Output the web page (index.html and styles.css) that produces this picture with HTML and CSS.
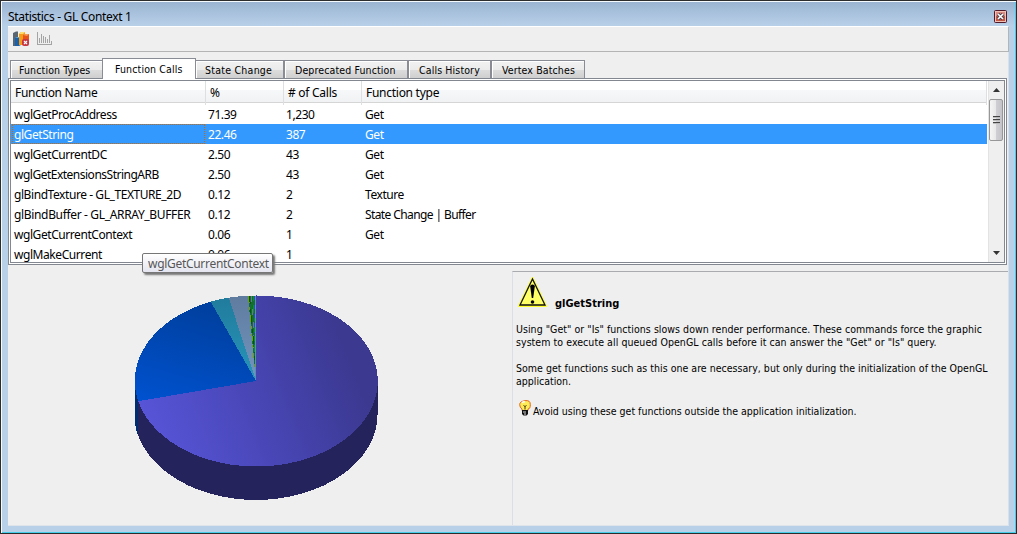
FILE: index.html
```
<!DOCTYPE html>
<html lang="en">
<head>
<meta charset="utf-8">
<title>Statistics - GL Context 1</title>
<link rel="stylesheet" href="styles.css">
</head>
<body>
<div class="window">
  <header class="titlebar">
    <span class="title">Statistics - GL Context 1</span>
    <svg class="close" width="13" height="13" viewBox="0 0 13 13"><rect x=".5" y=".5" width="12" height="12" rx="1" fill="#d98b80" stroke="#50192a"/><rect x="1.5" y="1.5" width="10" height="10" fill="none" stroke="#f0bfb5"/><rect x="2" y="6" width="9" height="5" fill="#c2553f"/><path d="M4 4l5 5M9 4l-5 5" stroke="#4b4150" stroke-width="3.2"/><path d="M4 4l5 5M9 4l-5 5" stroke="#fff" stroke-width="1.6"/></svg>
  </header>
  <main class="client">
    <div class="toolbar">
      <svg width="17" height="16" viewBox="0 0 17 16"><path d="M0 2l3-1.500h2V15H0z" fill="#596570"/><path d="M2 7l2-1h4v8l-2 1H2z" fill="#1761ad"/><path d="M2 7l2-1h4l-2 1z" fill="#55a4df"/><path d="M6 3l2-2h4v12l-2 1H6z" fill="#f59b16"/><path d="M6 3l2-2h4l-2 2z" fill="#ffdc69"/><path d="M10 4l2-1h4v9h-6z" fill="#e85319"/><path d="M10 4l2-1h4l-2 2z" fill="#f49a56"/><rect x="9" y="8" width="7" height="7" rx="2" fill="#c73845"/><path d="M11 10l3 3M14 10l-3 3" stroke="#fff" stroke-width="1.100"/></svg>
      <svg width="16" height="16" viewBox="0 0 16 16" shape-rendering="crispEdges"><path d="M.5 1v13M0 13.500h15M2.500 7v5M4.500 3v9M6.500 5v7M8.500 6v6M10.500 8v4M12.500 4v8M14.500 10v3" fill="none" stroke="#a4a4a4"/></svg>
    </div>
    <nav class="tabs">
      <div class="tab t1"><span>Function Types</span></div>
      <div class="tab t2 active"><span>Function Calls</span></div>
      <div class="tab t3"><span>State Change</span></div>
      <div class="tab t4"><span>Deprecated Function</span></div>
      <div class="tab t5"><span>Calls History</span></div>
      <div class="tab t6"><span>Vertex Batches</span></div>
    </nav>
    <section class="tabpage">
      <div class="list">
        <div class="grid">
          <div class="row head"><span>Function Name</span><span>%</span><span># of Calls</span><span>Function type</span></div>
          <div class="rows">
            <div class="row"><span>wglGetProcAddress</span><span>71.39</span><span>1,230</span><span>Get</span></div>
            <div class="row selected"><span>glGetString</span><span>22.46</span><span>387</span><span>Get</span></div>
            <div class="row"><span>wglGetCurrentDC</span><span>2.50</span><span>43</span><span>Get</span></div>
            <div class="row"><span class="tight">wglGetExtensionsStringARB</span><span>2.50</span><span>43</span><span>Get</span></div>
            <div class="row"><span>glBindTexture - GL_TEXTURE_2D</span><span>0.12</span><span>2</span><span>Texture</span></div>
            <div class="row"><span class="loose">glBindBuffer - GL_ARRAY_BUFFER</span><span>0.12</span><span>2</span><span class="tighter">State Change | Buffer</span></div>
            <div class="row"><span>wglGetCurrentContext</span><span>0.06</span><span>1</span><span>Get</span></div>
            <div class="row"><span>wglMakeCurrent</span><span>0.06</span><span>1</span><span></span></div>
          </div>
        </div>
        <div class="scrollbar">
          <div class="arrow"><svg width="7" height="4" viewBox="0 0 7 4"><path d="M0 4L3.500 0 7 4z" fill="#333"/></svg></div>
          <div class="thumb"><i></i><i></i><i></i></div>
          <div class="arrow down"><svg width="7" height="4" viewBox="0 0 7 4"><path d="M0 0L3.500 4 7 0z" fill="#333"/></svg></div>
        </div>
      </div>
    </section>
    <section class="lower">
      <div class="chart">
        <svg width="244" height="206" viewBox="0 0 244 206" shape-rendering="crispEdges">
          <defs>
            <linearGradient id="purple" gradientUnits="userSpaceOnUse" x1="18" y1="155" x2="220" y2="75"><stop offset="0" stop-color="#5855d9"/><stop offset=".5" stop-color="#4947b7"/><stop offset="1" stop-color="#3b3990"/></linearGradient>
            <linearGradient id="blue" x1=".35" y1="0" x2="0" y2="1"><stop offset="0" stop-color="#0040a0"/><stop offset="1" stop-color="#0052d0"/></linearGradient>
            <linearGradient id="teal" x1="0" y1="0" x2="0" y2="1"><stop offset="0" stop-color="#217c9d"/><stop offset="1" stop-color="#2795ba"/></linearGradient>
            <linearGradient id="steel" x1="0" y1="0" x2="0" y2="1"><stop offset="0" stop-color="#5f7c9f"/><stop offset="1" stop-color="#7495be"/></linearGradient>
          </defs>
          <path d="M.500 86v33.500A121.500 85.500 0 0 0 243.500 119.500V86z" fill="#25235b"/>
          <path d="M.500 86v33.500Q.500 130 3.500 139V105z" fill="#002d70"/>
          <path d="M122 86V.5A121.500 85.500 0 1 1 4.200 106.200z" fill="url(#purple)"/>
          <path d="M122 86L4.200 106.200A121.500 85.500 0 0 1 76.700 6.700z" fill="url(#blue)"/>
          <path d="M122 86L76.700 6.700A121.500 85.500 0 0 1 94.700 2.700z" fill="url(#teal)"/>
          <path d="M122 86L94.700 2.700A121.500 85.500 0 0 1 114 .7z" fill="url(#steel)"/>
          <path d="M122 86L114 .7 122 .5z" fill="#156c35"/>
          <path d="M114.500 1L121.500 80" stroke="#709e08" stroke-dasharray="7 4 3 5" fill="none"/>
          <path d="M115.500 1L121.500 70" stroke="#006000" stroke-dasharray="8 5 4 3" fill="none"/>
          <path d="M117.500 1L121.500 65" stroke="#6a70a8" stroke-dasharray="6 7" fill="none"/>
          <path d="M119.500 1L121.500 75" stroke="#09941b" stroke-dasharray="5 4 8 3" fill="none"/>
          <path d="M120.500 1L121.500 74" stroke="#2153bb" stroke-dasharray="4 5" fill="none"/>
          <path d="M121.500 1V85" stroke="#568fba" fill="none"/>
        </svg>
      </div>
      <article class="info">
        <div class="info-head">
          <svg width="29" height="30" viewBox="0 0 29 30"><path d="M14.500 1L28 29H1z" fill="#ffff66" stroke="#ffff30" stroke-width="2"/><path d="M14.500 2L27 28H2z" fill="#ffff66" stroke="#111" stroke-width="1.300"/><path d="M12.200 9.500Q12.200 7.500 14.500 7.500T16.800 9.500L15.200 21h-1.400z"/><circle cx="14.500" cy="25" r="1.800"/></svg>
          <h1><span>glGetString</span></h1>
        </div>
        <p><span class="a1">Using "Get" or "Is" functions slows down render performance. These commands force the graphic</span><br><span class="a2">system to execute all queued OpenGL calls before it can answer the "Get" or "Is" query.</span></p>
        <p><span class="a3">Some get functions such as this one are necessary, but only during the initialization of the OpenGL</span><br><span class="a4">application.</span></p>
        <div class="tip">
          <svg width="12" height="16" viewBox="0 0 12 16"><path d="M3 9Q.7 7.500.7 4.500T6 .7t5.300 3.800T9 9v1.500H3z" fill="#ffed58" stroke="#e36218"/><path d="M3 3q1-2 3-1" stroke="#fff" stroke-width="1.500" fill="none"/><path d="M4.500 5.500l1.500 1 1.500-1M6 6.500v3" stroke="#45340e" fill="none"/><path d="M3 10h6v4l-1.500 1.500h-3L3 14z" fill="#111"/><path d="M4 12h3M5 14h2" stroke="#ddd"/></svg>
          <span class="a5">Avoid using these get functions outside the application initialization.</span>
        </div>
      </article>
    </section>
  </main>
  <div class="tooltip"><span>wglGetCurrentContext</span></div>
</div>
</body>
</html>
```
FILE: styles.css
```
* { box-sizing: border-box; }
body { margin: 0; font-family: "DejaVu Sans Condensed", "DejaVu Sans", sans-serif; font-stretch: condensed; font-size: 10.5px; color: #000; }
svg { display: block; flex: none; }
.window { width: 1017px; height: 534px; position: relative; border: 1px solid #2c2c2c; padding: 0 7px 7px; background: #b9d0e9; box-shadow: inset 1px 1px #f5fafd, inset -1px -1px #45cdea; display: flex; flex-direction: column; overflow: hidden; white-space: nowrap; }
.titlebar { height: 24px; flex: none; margin: 1px -6px 0; padding: 2px 8px 0 6px; display: flex; align-items: center; justify-content: space-between; background: linear-gradient(#9ab4d1, #b9d0e9); font-family: "Noto Sans", sans-serif; font-size: 12px; }
.title { letter-spacing: -.33px; padding-top: 2px; }
.close { margin-top: 3px; }
.client { width: 1001px; flex: 1; min-height: 0; background: #efefef; display: flex; flex-direction: column; border-right: 1px solid #d9e0ea; border-bottom: 1px solid #dfe4ea; }
.toolbar { width: 1001px; height: 26px; flex: none; border-top: 1px solid #fff; border-right: 1px solid #b4b4b4; border-bottom: 1px solid #b4b4b4; padding: 4px 5px; display: flex; gap: 7px; }
.tabs { height: 26px; flex: none; display: flex; align-items: flex-end; padding-left: 2px; letter-spacing: .13px; }
.tab { height: 18px; border: 1px solid #898c95; border-width: 1px 1px 0; background: linear-gradient(#f2f2f2, #ebebeb 50%, #dddddd 51%, #cfcfcf); box-shadow: inset 1px 1px #fff; padding: 3px 0 0 8px; line-height: 13px; }
.tab.active { height: 21px; background: #fff; padding: 4px 0 0 12px; margin-bottom: -1px; position: relative; }
.t1 { width: 93px; border-right: 0; }
.t2 { width: 94px; margin-left: -1px; }
.t3 { width: 88px; border-left: 0; padding-left: 9px; letter-spacing: .25px; }
.t4 { width: 124px; padding-left: 10px; }
.t5 { width: 83px; padding-left: 10px; }
.t6 { width: 94px; padding-left: 10px; }
.tabpage { width: 999px; height: 187px; flex: none; border: 1px solid #828790; background: #fff; padding: 1px; }
.list { width: 995px; height: 183px; border: 1px solid #828790; display: flex; overflow: hidden; font-family: "Noto Sans", sans-serif; font-size: 12px; }
.grid { width: 976px; }
.row { display: grid; grid-template-columns: 194px 78px 79px 1fr; height: 20px; line-height: 20px; letter-spacing: -.43px; }
.row span { padding-left: 3px; }
.row span:last-child { padding-left: 3px; }
.row .tight { letter-spacing: -.5px; }
.row .tighter { letter-spacing: -.6px; }
.row .loose { letter-spacing: -.34px; }
.row.head { grid-template-columns: 195px 78px 78px 1fr; width: 976px; height: 22px; line-height: 24px; letter-spacing: -.27px; border-bottom: 1px solid #d5d5d5; background: linear-gradient(#fff 9px, #f7f8fa 9px, #f1f2f4); }
.head span { border-right: 1px solid #dedfe1; }
.row.head span { padding-left: 4px; }
.rows { padding-top: 1px; }
.rows .row { line-height: 22px; }
.selected { background: #3399ff; color: #fff; }
.selected span:first-child { outline: 1px dotted #cc6600; outline-offset: -1px; margin-left: 1px; padding-left: 2px; height: 20px; overflow: hidden; }
.scrollbar { width: 16px; margin-left: auto; background: #efefef; border-left: 1px solid #e3e3e3; display: flex; flex-direction: column; }
.arrow { height: 18px; flex: none; display: flex; align-items: center; justify-content: center; padding-right: 1px; }
.down { margin-top: auto; }
.thumb { width: 14px; height: 42px; border: 1px solid #979797; border-radius: 2px; background: linear-gradient(90deg, #f5f5f5, #e8e8e8 48%, #d0d0d4 50%, #c4c4c8); display: flex; flex-direction: column; align-items: center; justify-content: center; gap: 1px; }
.thumb i { width: 7px; height: 2px; border-top: 1px solid #444; background: #bbb; }
.lower { flex: 1; min-height: 0; display: flex; padding-top: 6px; }
.chart { width: 504px; padding: 24px 0 0 126px; }
.info { width: 496px; border-top: 1px solid #a9abaf; border-left: 1px solid #dddde8; padding: 5px 0 0 3px; line-height: 13px; }
.info-head { display: flex; height: 46px; padding-left: 2px; }
.info h1 { margin: 20px 0 0 8px; font-size: 11px; line-height: 13px; }
.info p { margin: 0 0 13px; }
.a1 { letter-spacing: .045px; }
.a2 { letter-spacing: .06px; }
.a3 { letter-spacing: .025px; }
.tip { display: flex; padding: 0 0 0 3px; gap: 2px; margin-top: -1px; }
.tip span { padding-top: 5px; }
.tooltip { position: absolute; left: 141px; top: 252px; width: 131px; height: 20px; border: 1px solid #767676; border-radius: 2px; background: linear-gradient(#fff, #e4e5f0); color: #575757; box-shadow: 2px 2px 2px #777; padding-left: 5px; font: 12px/19px "Noto Sans", sans-serif; letter-spacing: -.3px; }
```
